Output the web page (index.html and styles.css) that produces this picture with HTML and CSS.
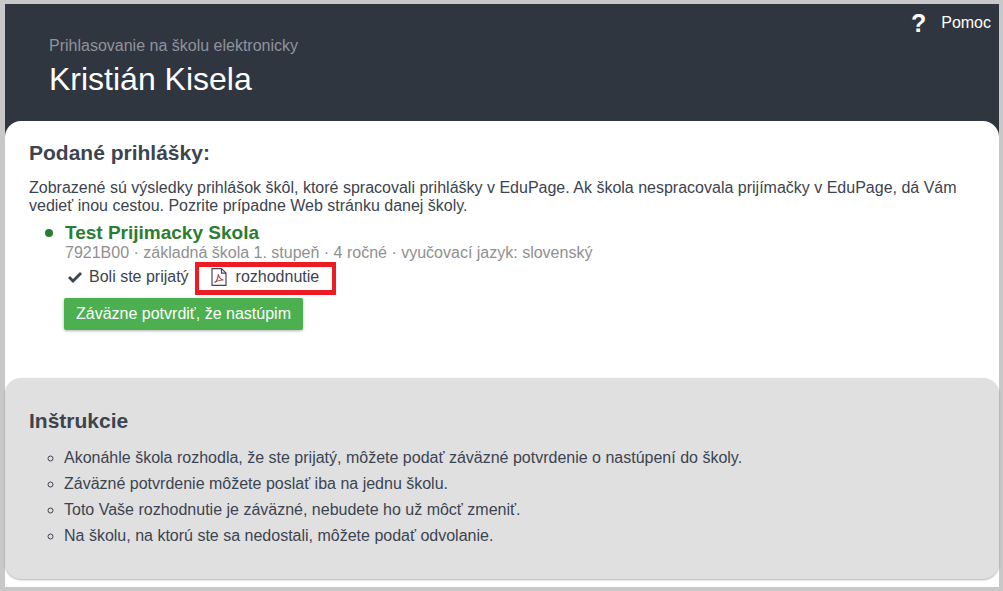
FILE: index.html
```html
<!DOCTYPE html>
<html lang="sk">
<head>
  <meta charset="UTF-8" />
  <title>Prihlasovanie na školu elektronicky</title>
  <link rel="stylesheet" href="styles.css">
</head>
<body>
  <div class="page">
    <header class="top">
      <a class="help"><span class="help-icon">?</span><span>Pomoc</span></a>
      <div class="subtitle">Prihlasovanie na školu elektronicky</div>
      <h1 class="name">Kristián Kisela</h1>
    </header>

    <main class="main">
      <section class="card">
        <h2>Podané prihlášky:</h2>
        <p class="intro">Zobrazené sú výsledky prihlášok škôl, ktoré spracovali prihlášky v EduPage. Ak škola nespracovala prijímačky v EduPage, dá Vám vedieť inou cestou. Pozrite prípadne Web stránku danej školy.</p>
        <ul class="schools">
          <li>
            <div class="school-name">Test Prijimacky Skola</div>
            <div class="school-info">7921B00 · základná škola 1. stupeň · 4 ročné · vyučovací jazyk: slovenský</div>
            <div class="result">
              <svg class="check" viewBox="0 0 16 13" width="16" height="13"><path d="M1 7l2-2 3 3 7-7 2 2-9 9z" fill="#3c4450"/></svg>
              <span>Boli ste prijatý</span>
              <a class="doc">
                <svg class="pdf" viewBox="0 0 16 18" width="16" height="18">
                  <path d="M1 .6h9.500l4.500 4.500v12.300h-14z" fill="#fff" stroke="#4a4458" stroke-width="1.200"/>
                  <path d="M10.500 .6v4.500h4.500" fill="none" stroke="#4a4458" stroke-width="1.200"/>
                  <path d="M3.500 14.500c2-1 4-5 3.800-8.500 .5 3 2.500 5.500 5.200 6-3-.3-6 .5-9 2.500z" fill="none" stroke="#a8485a" stroke-width="1.100"/>
                </svg>
                <span>rozhodnutie</span>
              </a>
            </div>
            <button class="confirm">Záväzne potvrdiť, že nastúpim</button>
          </li>
        </ul>
      </section>

      <section class="instructions">
        <h2>Inštrukcie</h2>
        <ul>
          <li>Akonáhle škola rozhodla, že ste prijatý, môžete podať záväzné potvrdenie o nastúpení do školy.</li>
          <li>Záväzné potvrdenie môžete poslať iba na jednu školu.</li>
          <li>Toto Vaše rozhodnutie je záväzné, nebudete ho už môcť zmeniť.</li>
          <li>Na školu, na ktorú ste sa nedostali, môžete podať odvolanie.</li>
        </ul>
      </section>
    </main>
  </div>
</body>
</html>
```

FILE: styles.css
```css
html, body {
  height: 100%;
}

body {
  margin: 0;
  padding: 4px 4px 4px 5px;
  box-sizing: border-box;
  background: #c8c8c8;
  font-family: "Liberation Sans", Arial, sans-serif;
  font-size: 16px;
  color: #3c4450;
  overflow: hidden;
}

.page {
  height: 583px;
  background: #2f3640;
  display: flex;
  flex-direction: column;
}

.top {
  height: 117px;
  flex: none;
  box-sizing: border-box;
  padding: 34px 0 0 44px;
  position: relative;
}

.help {
  position: absolute;
  top: 7px;
  right: 8px;
  display: flex;
  align-items: center;
  gap: 15px;
  color: #fff;
}

.help-icon {
  font-size: 25px;
  font-weight: bold;
  line-height: 24px;
}

.subtitle {
  color: #90939a;
  line-height: 16px;
}

.name {
  margin: 7px 0 0;
  color: #fff;
  font-size: 32px;
  font-weight: normal;
  line-height: 36px;
}

.main {
  flex: 1;
  background: #fff;
  border-radius: 16px 16px 0 0;
  padding-bottom: 8px;
  display: flex;
  flex-direction: column;
}

.card {
  height: 257px;
  flex: none;
  box-sizing: border-box;
  padding: 20px 24px 0;
}

.card h2, .instructions h2 {
  margin: 0;
  font-size: 21px;
  line-height: 24px;
  font-weight: bold;
}

.intro {
  margin: 14px 0 0;
  line-height: 18px;
}

.schools {
  list-style: none;
  margin: 7px 0 0;
  padding: 0 0 0 36px;
  color: #2a7d32;
  font-size: 19px;
}

.schools li {
  position: relative;
}

.schools li::before {
  content: "";
  position: absolute;
  left: -20px;
  top: 7px;
  width: 8px;
  height: 8px;
  border-radius: 50%;
  background: #2a7d32;
}

.school-name {
  font-weight: bold;
  line-height: 22px;
}

.school-info {
  color: #909090;
  font-size: 16px;
  line-height: 18px;
}

.result {
  display: flex;
  align-items: center;
  color: #3c4450;
  font-size: 16px;
  margin-top: 5px;
  height: 20px;
}

.check {
  margin: 0 6px 0 2px;
}

.doc {
  display: flex;
  align-items: center;
  gap: 9px;
  margin-left: 22px;
  position: relative;
}

.doc::after {
  content: "";
  position: absolute;
  left: -16px;
  right: -17px;
  top: -6px;
  bottom: -9px;
  border: solid #ed1c24;
  border-width: 5px 4px;
}

.confirm {
  display: block;
  margin: 11px 0 0 -1px;
  height: 32px;
  width: 239px;
  padding: 0;
  border: none;
  border-radius: 2px;
  background: #4caf50;
  color: #fff;
  font: 16px "Liberation Sans", Arial, sans-serif;
  box-shadow: 0 1px 3px rgba(0, 0, 0, 0.3);
}

.instructions {
  flex: 1;
  background: #e0e0e0;
  border-radius: 16px;
  box-sizing: border-box;
  padding: 31px 24px 0;
  box-shadow: 0 1px 2px rgba(0, 0, 0, 0.3);
}

.instructions ul {
  list-style: circle;
  margin: 12px 0 0;
  padding: 0 0 0 35px;
}

.instructions li {
  line-height: 26px;
}
```
